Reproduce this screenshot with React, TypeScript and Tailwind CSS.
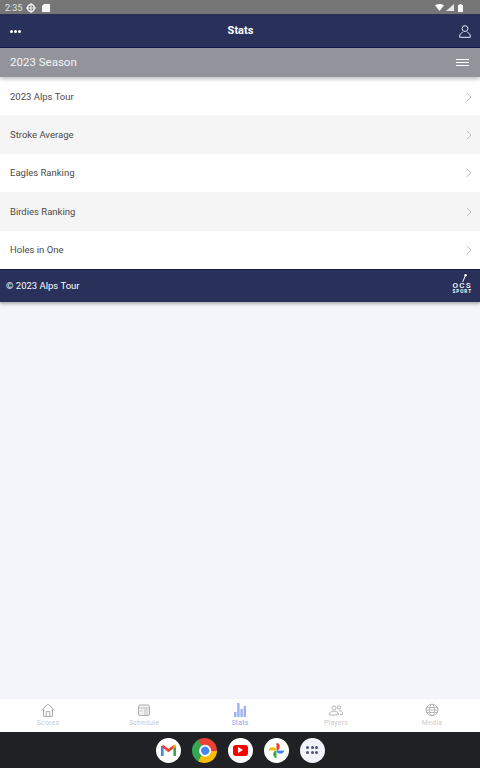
import { ChevronRight } from "lucide-react";

const rows = ["2023 Alps Tour", "Stroke Average", "Eagles Ranking", "Birdies Ranking", "Holes in One"];

function StatusBar() {
  return (
    <div className="flex h-[14px] items-center justify-between bg-[#767676] pl-[5px] pr-[17px] pt-px text-[9px] leading-[13px] text-[#e4e4e4]">
      <div className="flex items-center gap-[4px]">
        <span className="pt-[2px]">2:35</span>
        <svg width="10" height="10" viewBox="0 0 10 10" fill="none" stroke="#f2f2f2">
          <circle cx="5" cy="5" r="3.4" strokeWidth="1.5" />
          <path d="M5 0v10M0 5h10" strokeWidth="1" />
        </svg>
        <svg width="8" height="8" viewBox="0 0 8 8" className="ml-[2px]">
          <path d="M2 0h6v8H0V2z" fill="#f5f5f5" />
        </svg>
      </div>
      <div className="flex items-center gap-[2px]">
        <svg width="9" height="7" viewBox="0 0 9 7">
          <path d="M0 1.2Q4.5-1 9 1.2L4.5 7z" fill="#fafafa" />
        </svg>
        <svg width="8" height="7" viewBox="0 0 8 7" className="mr-[2px]">
          <path d="M8 0v7H0z" fill="#e8e8e8" />
        </svg>
        <svg width="5" height="8" viewBox="0 0 5 8">
          <path d="M1.5 0h2v1H5v7H0V1h1.5z" fill="#fafafa" />
        </svg>
      </div>
    </div>
  );
}

function Header() {
  return (
    <div className="grid h-[34px] grid-cols-3 items-center border-b border-[#12164a] bg-[#29305a] pl-[10px] pr-[9px] pt-px">
      <div className="flex gap-[1px]">
        <span className="size-[3px] rounded-full bg-white" />
        <span className="size-[3px] rounded-full bg-white" />
        <span className="size-[3px] rounded-full bg-white" />
      </div>
      <span className="text-center text-[11px] font-bold text-white">Stats</span>
      <svg width="12" height="13" viewBox="0 0 12 13" fill="none" stroke="#e8ebff" className="justify-self-end">
        <circle cx="6" cy="3.6" r="2.9" />
        <path d="M3.6 7.4C2 8 .7 9.2.7 11.2v1.1h10.6v-1.1c0-2-1.3-3.2-2.9-3.8" />
      </svg>
    </div>
  );
}

function SeasonBar() {
  return (
    <div className="relative z-10 flex h-[29px] items-center justify-between bg-[#93939c] pl-[10px] pr-[11px] shadow-[0_2px_4px_rgba(0,0,0,0.25)]">
      <span className="text-[11.5px] text-[#f5f5f5]">2023 Season</span>
      <div className="flex w-[13px] flex-col gap-[2px]">
        <span className="h-px bg-white" />
        <span className="h-px bg-white" />
        <span className="h-px bg-white" />
      </div>
    </div>
  );
}

function Footer() {
  return (
    <div className="flex h-[33px] items-center justify-between border-t border-[#1a1f4e] bg-[#29305a] pl-[6px] pr-[8px] shadow-[0_2px_3px_rgba(0,0,0,0.3)]">
      <span className="text-[9.5px] text-white">© 2023 Alps Tour</span>
      <div className="relative flex flex-col items-center pt-[5px] leading-none text-white">
        <svg width="5" height="8" viewBox="0 0 5 8" className="absolute -top-[3px] left-[10px]">
          <path d="M.7 8 3.4 1.5" stroke="#fff" strokeWidth="1" />
          <circle cx="3.6" cy="1.3" r="1.2" fill="#fff" />
        </svg>
        <span className="text-[8px] leading-[7px] font-medium tracking-[1.3px]">OCS</span>
        <span className="mt-[1px] text-[4.6px] leading-[4px] font-bold tracking-[1px]">SPORT</span>
      </div>
    </div>
  );
}

function TabIcon({ children }: { children: React.ReactNode }) {
  return (
    <svg width="14" height="14" viewBox="0 0 14 14" fill="none" stroke="#acacac" strokeWidth="1">
      {children}
    </svg>
  );
}

function TabBar() {
  return (
    <div className="grid h-[33px] grid-cols-5 bg-white text-[7px] leading-[9px] tracking-[0.2px] text-[#c9cbd1]">
      <div className="flex flex-col items-center pt-[4px]">
        <TabIcon>
          <path d="M.8 7 7 1.2 13.2 7M2.5 5.6v7.8h9V5.6M5.2 13.4V8.6h3.6v4.8" />
        </TabIcon>
        <span className="mt-[2px]">Scores</span>
      </div>
      <div className="flex flex-col items-center pt-[4px]">
        <TabIcon>
          <rect x="1.5" y="2" width="11" height="10.5" rx="1.5" fill="#f1f1f1" />
          <path d="M1.5 5h11M7 7h4M7 9h4M7 11h4M3 8h2.5" strokeWidth="0.7" />
        </TabIcon>
        <span className="mt-[2px]">Schedule</span>
      </div>
      <div className="flex flex-col items-center pt-[4px] text-[#8ea6ee]">
        <svg width="14" height="14" viewBox="0 0 14 14" fill="#9db2f0">
          <rect x="1" y="9" width="2.4" height="5" />
          <rect x="4.2" y="0" width="2.4" height="14" />
          <rect x="7.4" y="6" width="2.4" height="8" />
          <rect x="10.6" y="3" width="2.4" height="11" />
        </svg>
        <span className="mt-[2px]">Stats</span>
      </div>
      <div className="flex flex-col items-center pt-[4px]">
        <TabIcon>
          <circle cx="5" cy="5" r="2.1" strokeWidth="0.9" />
          <circle cx="10" cy="4.4" r="1.7" strokeWidth="0.9" />
          <path d="M.6 12v-1c0-1.8 2-2.8 4.4-2.8S9.4 9.2 9.4 11v1z" strokeWidth="0.9" />
          <path d="M9.8 7.8c2 0 3.7.8 3.7 2.4v1.3H11" strokeWidth="0.9" />
        </TabIcon>
        <span className="mt-[2px]">Players</span>
      </div>
      <div className="flex flex-col items-center pt-[4px]">
        <TabIcon>
          <circle cx="7" cy="7" r="5.8" strokeWidth="0.9" />
          <ellipse cx="7" cy="7" rx="2.6" ry="5.8" strokeWidth="0.8" />
          <path d="M1.8 4.5h10.4M1.8 9.5h10.4M1.2 7h11.6" strokeWidth="0.8" />
        </TabIcon>
        <span className="mt-[2px]">Media</span>
      </div>
    </div>
  );
}

function Dock() {
  return (
    <div className="flex h-[36px] items-center justify-center gap-[11px] bg-[#202124]">
      <div className="flex size-[25px] items-center justify-center rounded-full bg-white">
        <svg width="15" height="12" viewBox="0 0 15 12" fill="none">
          <path d="M1.3 12V2" stroke="#4285f4" strokeWidth="2.6" />
          <path d="M13.7 12V2" stroke="#34a853" strokeWidth="2.6" />
          <path d="M1.3 1.8 7.5 6.6 13.7 1.8" stroke="#ea4335" strokeWidth="2.6" />
          <path d="M12.5 1 14.8.6v2.9L12.5 4z" fill="#fbbc04" />
        </svg>
      </div>
      <div className="relative size-[25px] rotate-[-30deg] rounded-full bg-[conic-gradient(#ea4335_0deg_120deg,#fbbc04_120deg_240deg,#34a853_240deg_360deg)]">
        <div className="absolute left-[6.5px] top-[6.5px] size-[12px] rounded-full border-2 border-white bg-[#4285f4]" />
      </div>
      <div className="flex size-[25px] items-center justify-center rounded-full bg-white">
        <div className="flex h-[11px] w-[15px] items-center justify-center rounded-[3px] bg-[#f00]">
          <svg width="5" height="6" viewBox="0 0 5 6">
            <path d="M0 0l5 3-5 3z" fill="#fff" />
          </svg>
        </div>
      </div>
      <div className="flex size-[25px] items-center justify-center rounded-full bg-white">
        <svg width="19" height="19" viewBox="0 0 16 16">
          <path d="M8 8V1.5a3.3 3.3 0 0 1 0 6.5z" fill="#ea4335" />
          <path d="M8 8h6.5a3.3 3.3 0 0 1-6.5 0z" fill="#4285f4" />
          <path d="M8 8v6.5a3.3 3.3 0 0 1 0-6.5z" fill="#34a853" />
          <path d="M8 8H1.5a3.3 3.3 0 0 1 6.500 0z" fill="#fbbc04" />
        </svg>
      </div>
      <div className="flex size-[25px] items-center justify-center rounded-full bg-[#f1f3fb]">
        <div className="grid grid-cols-3 gap-[1.5px]">
          {[0, 1, 2, 3, 4, 5].map((d) => (
            <span key={d} className="size-[3px] rounded-full bg-[#4a4f7c]" />
          ))}
        </div>
      </div>
    </div>
  );
}

export default function App() {
  return (
    <div className="flex h-[768px] flex-col bg-[#f3f5fa] font-['Roboto',sans-serif]">
      <StatusBar />
      <Header />
      <SeasonBar />
      <div className="flex-1">
        {rows.map((row, idx) => (
          <div
            key={row}
            className={`flex h-[38.4px] items-center justify-between pl-[10px] pr-[3.5px] pt-[1px] ${idx % 2 === 1 ? "bg-[#f5f5f5]" : "bg-white"}`}
          >
            <span className="text-[9.5px] text-[#4a4a4a]">{row}</span>
            <ChevronRight size={16} strokeWidth={1.5} className="text-[#c0c0c0]" />
          </div>
        ))}
        <Footer />
      </div>
      <TabBar />
      <Dock />
    </div>
  );
}
